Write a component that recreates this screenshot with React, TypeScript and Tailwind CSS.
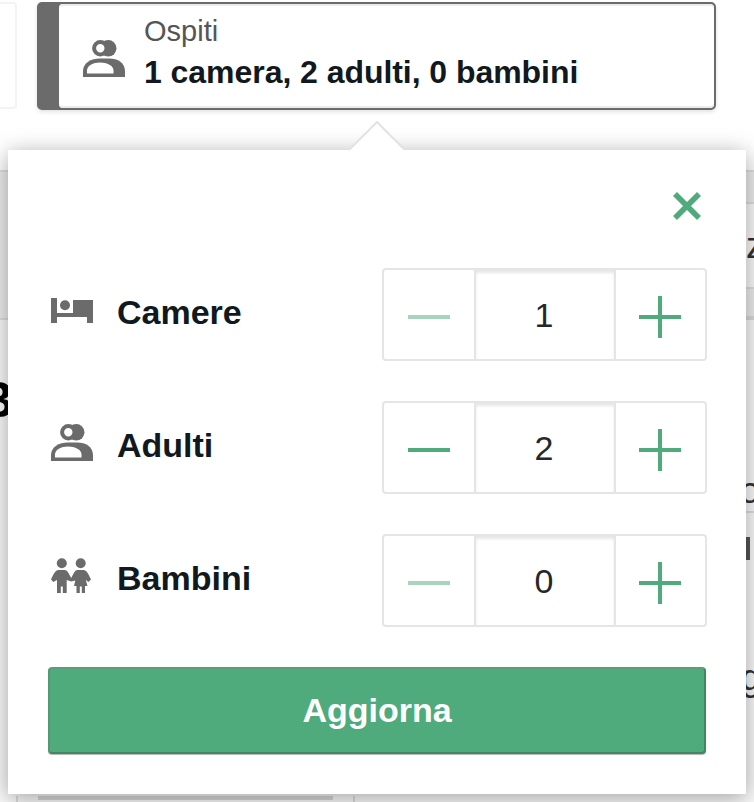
import React from "react";

function GuestsIcon() {
  return (
    <svg width="42" height="38" viewBox="0 0 42 38" className="shrink-0">
      <circle cx="25.2" cy="8.3" r="8.3" fill="#6b6b6b" />
      <circle cx="17.3" cy="8.3" r="6.2" fill="white" stroke="#6b6b6b" strokeWidth="4" />
      <path d="M0 37V31C0 23 8 18.5 17 18.5H26C35 18.5 42 23 42 31V37Z" fill="#6b6b6b" />
      <path d="M4 33.5V30.5C4 25.5 10 22.5 17 22.5C24 22.5 30.5 25.5 30.5 30.5V33.5Z" fill="white" />
    </svg>
  );
}

function BedIcon() {
  return (
    <svg width="42" height="25" viewBox="0 0 42 25" className="shrink-0" fill="#6b6b6b">
      <path d="M0 0H6V15H22V2H42V25H36V19H6V25H0Z" />
      <circle cx="14" cy="7.2" r="5" />
    </svg>
  );
}

function ChildrenIcon() {
  return (
    <svg width="40" height="36" viewBox="0 0 40 36" className="shrink-0" fill="#6b6b6b">
      <circle cx="10.8" cy="5.2" r="5" />
      <circle cx="29.7" cy="5.2" r="5" />
      <path d="M7.5 12H13.5C16.5 12 17.5 15 20.2 20C22.8 15 24 12 26.5 12H32.5C35.5 12 37.5 16 40 21.5L37.5 24L34.8 22L36.5 28H34V35H30.8V28.5H28.8V35H25.5V28H23L24.3 22.5L20.2 23.5L15.7 22V35H11.8V28.5H9.8V35H6V22L2.3 24L0 21.5C2.5 16 4.5 12 7.5 12Z" />
    </svg>
  );
}

function Stepper({ value, disabled = false }: { value: number; disabled?: boolean }) {
  return (
    <div className="flex h-[93px] w-[325px] overflow-hidden rounded border-2 border-[#e5e5e5] bg-white">
      <button className="flex w-[90px] items-center justify-center pt-1" aria-label="Diminuisci">
        <svg width="42" height="42" viewBox="0 0 42 42" className={disabled ? "opacity-50" : ""}>
          <path d="M0 21H42" stroke="#4fab7b" strokeWidth="4" />
        </svg>
      </button>
      <div className="flex w-[142px] items-center justify-center border-x-2 border-[#e5e5e5] pt-0.5 pr-0.5 text-[34px] text-[#24282b] shadow-[inset_0_3px_3px_#e7e7e7]">
        {value}
      </div>
      <button className="flex flex-1 items-center justify-center pt-1 pr-0.5" aria-label="Aumenta">
        <svg width="42" height="42" viewBox="0 0 42 42">
          <path d="M0 21H42M21 0V42" stroke="#4fab7b" strokeWidth="4" />
        </svg>
      </button>
    </div>
  );
}

function Row({ icon, label, value, disabled }: { icon: React.ReactNode; label: string; value: number; disabled?: boolean }) {
  return (
    <div className="flex h-[93px] items-center">
      <div className="flex w-[66px] pb-[9px]">{icon}</div>
      <div className="flex-1 pb-1.5 text-[34px] leading-10 font-bold text-[#101820]">{label}</div>
      <Stepper value={value} disabled={disabled} />
    </div>
  );
}

function Backdrop() {
  return (
    <div className="flex h-[632px] justify-between bg-[#fafafa]">
      <div className="flex w-2 flex-col overflow-hidden">
        <div className="h-[150px] shrink-0 border-y-2 border-[#dedede] bg-[#ededed]" />
        <div className="mt-[52px] -ml-[22px] text-[50px] leading-[56px] font-bold text-black">B</div>
      </div>
      <div className="flex w-2 flex-col overflow-hidden text-[36px] leading-10 text-[#333]">
        <div className="h-8 shrink-0 border-t-2 border-[#dedede] bg-[#ededed]" />
        <div className="h-[87px] shrink-0 border-y-2 border-[#dedede] bg-[#fafafa] pt-[22px]">z</div>
        <div className="h-[31px] shrink-0 border-b-4 border-[#dadada] bg-[#ededed]" />
        <div className="mt-[151px] -ml-[6px] h-[42px] shrink-0 border-b-2 border-[#dedede]">o</div>
        <div className="mt-[24px] h-[23px] w-1 shrink-0 bg-[#555]" />
        <div className="mt-[98px] -ml-[5px]">g</div>
      </div>
    </div>
  );
}

export default function App() {
  return (
    <main className="relative h-[802px] w-[754px] overflow-hidden bg-white font-['Liberation_Sans',Arial,sans-serif]">
      <header className="flex h-[170px] items-start gap-5 pt-0.5">
        <div className="h-[107px] w-[17px] rounded-r border-y-2 border-r-2 border-[#f3f3f3]" />
        <div className="flex h-[108px] w-[679px] rounded-[5px] border-2 border-[#6b6b6b] bg-[#6b6b6b] shadow-[0_2px_4px_#e2e2e2]">
          <div className="w-[20px]" />
          <div className="flex flex-1 rounded bg-white pt-[36px] pl-[24px] shadow-[inset_0_2px_0_#ececec,inset_0_-2px_0_#ececec]">
            <GuestsIcon />
            <div className="-mt-[29px] ml-[19px]">
              <div className="text-[29px] leading-[40px] text-[#555]">Ospiti</div>
              <div className="text-[32px] leading-[42px] font-bold tracking-[-0.05px] whitespace-nowrap text-[#101820]">
                1 camera, 2 adulti, 0 bambini
              </div>
            </div>
          </div>
        </div>
      </header>
      <Backdrop />
      <div className="absolute top-[796px] left-[16px] flex h-1.5 w-[339px] justify-between border-x-2 border-[#ddd] pl-5">
        <div className="h-1 w-[295px] bg-[#d8d8d8]" />
      </div>

      <section className="absolute top-[150px] left-2 flex h-[644px] w-[738px] flex-col bg-white px-10 pt-[42px] shadow-[0_4px_22px_rgba(0,0,0,0.36)]">
        <svg width="58" height="30" viewBox="0 0 58 30" className="absolute -top-[29px] left-[340px]">
          <path d="M1 29.5L29 1L57 29.5Z" fill="white" />
          <path d="M1 29L29 1L57 29" fill="none" stroke="#e3e3e3" strokeWidth="2" />
        </svg>
        <button className="mr-[5px] self-end" aria-label="Chiudi">
          <svg width="28" height="28" viewBox="0 0 28 28">
            <path d="M2 2L26 26M26 2L2 26" stroke="#4fab7b" strokeWidth="5.6" />
          </svg>
        </button>
        <div className="mt-[48px] -mr-px ml-[3px] flex flex-col gap-10">
          <Row icon={<BedIcon />} label="Camere" value={1} disabled />
          <Row icon={<GuestsIcon />} label="Adulti" value={2} />
          <Row icon={<ChildrenIcon />} label="Bambini" value={0} disabled />
        </div>
        <button className="mt-[40px] h-[87px] shrink-0 rounded border-2 border-t-[#55a078] border-r-[#43865f] border-b-[#43865f] border-l-[#579675] bg-[#4fab7b] text-[34px] font-bold text-white shadow-[0_1px_1px_#b5b5b5]">
          Aggiorna
        </button>
      </section>
    </main>
  );
}
